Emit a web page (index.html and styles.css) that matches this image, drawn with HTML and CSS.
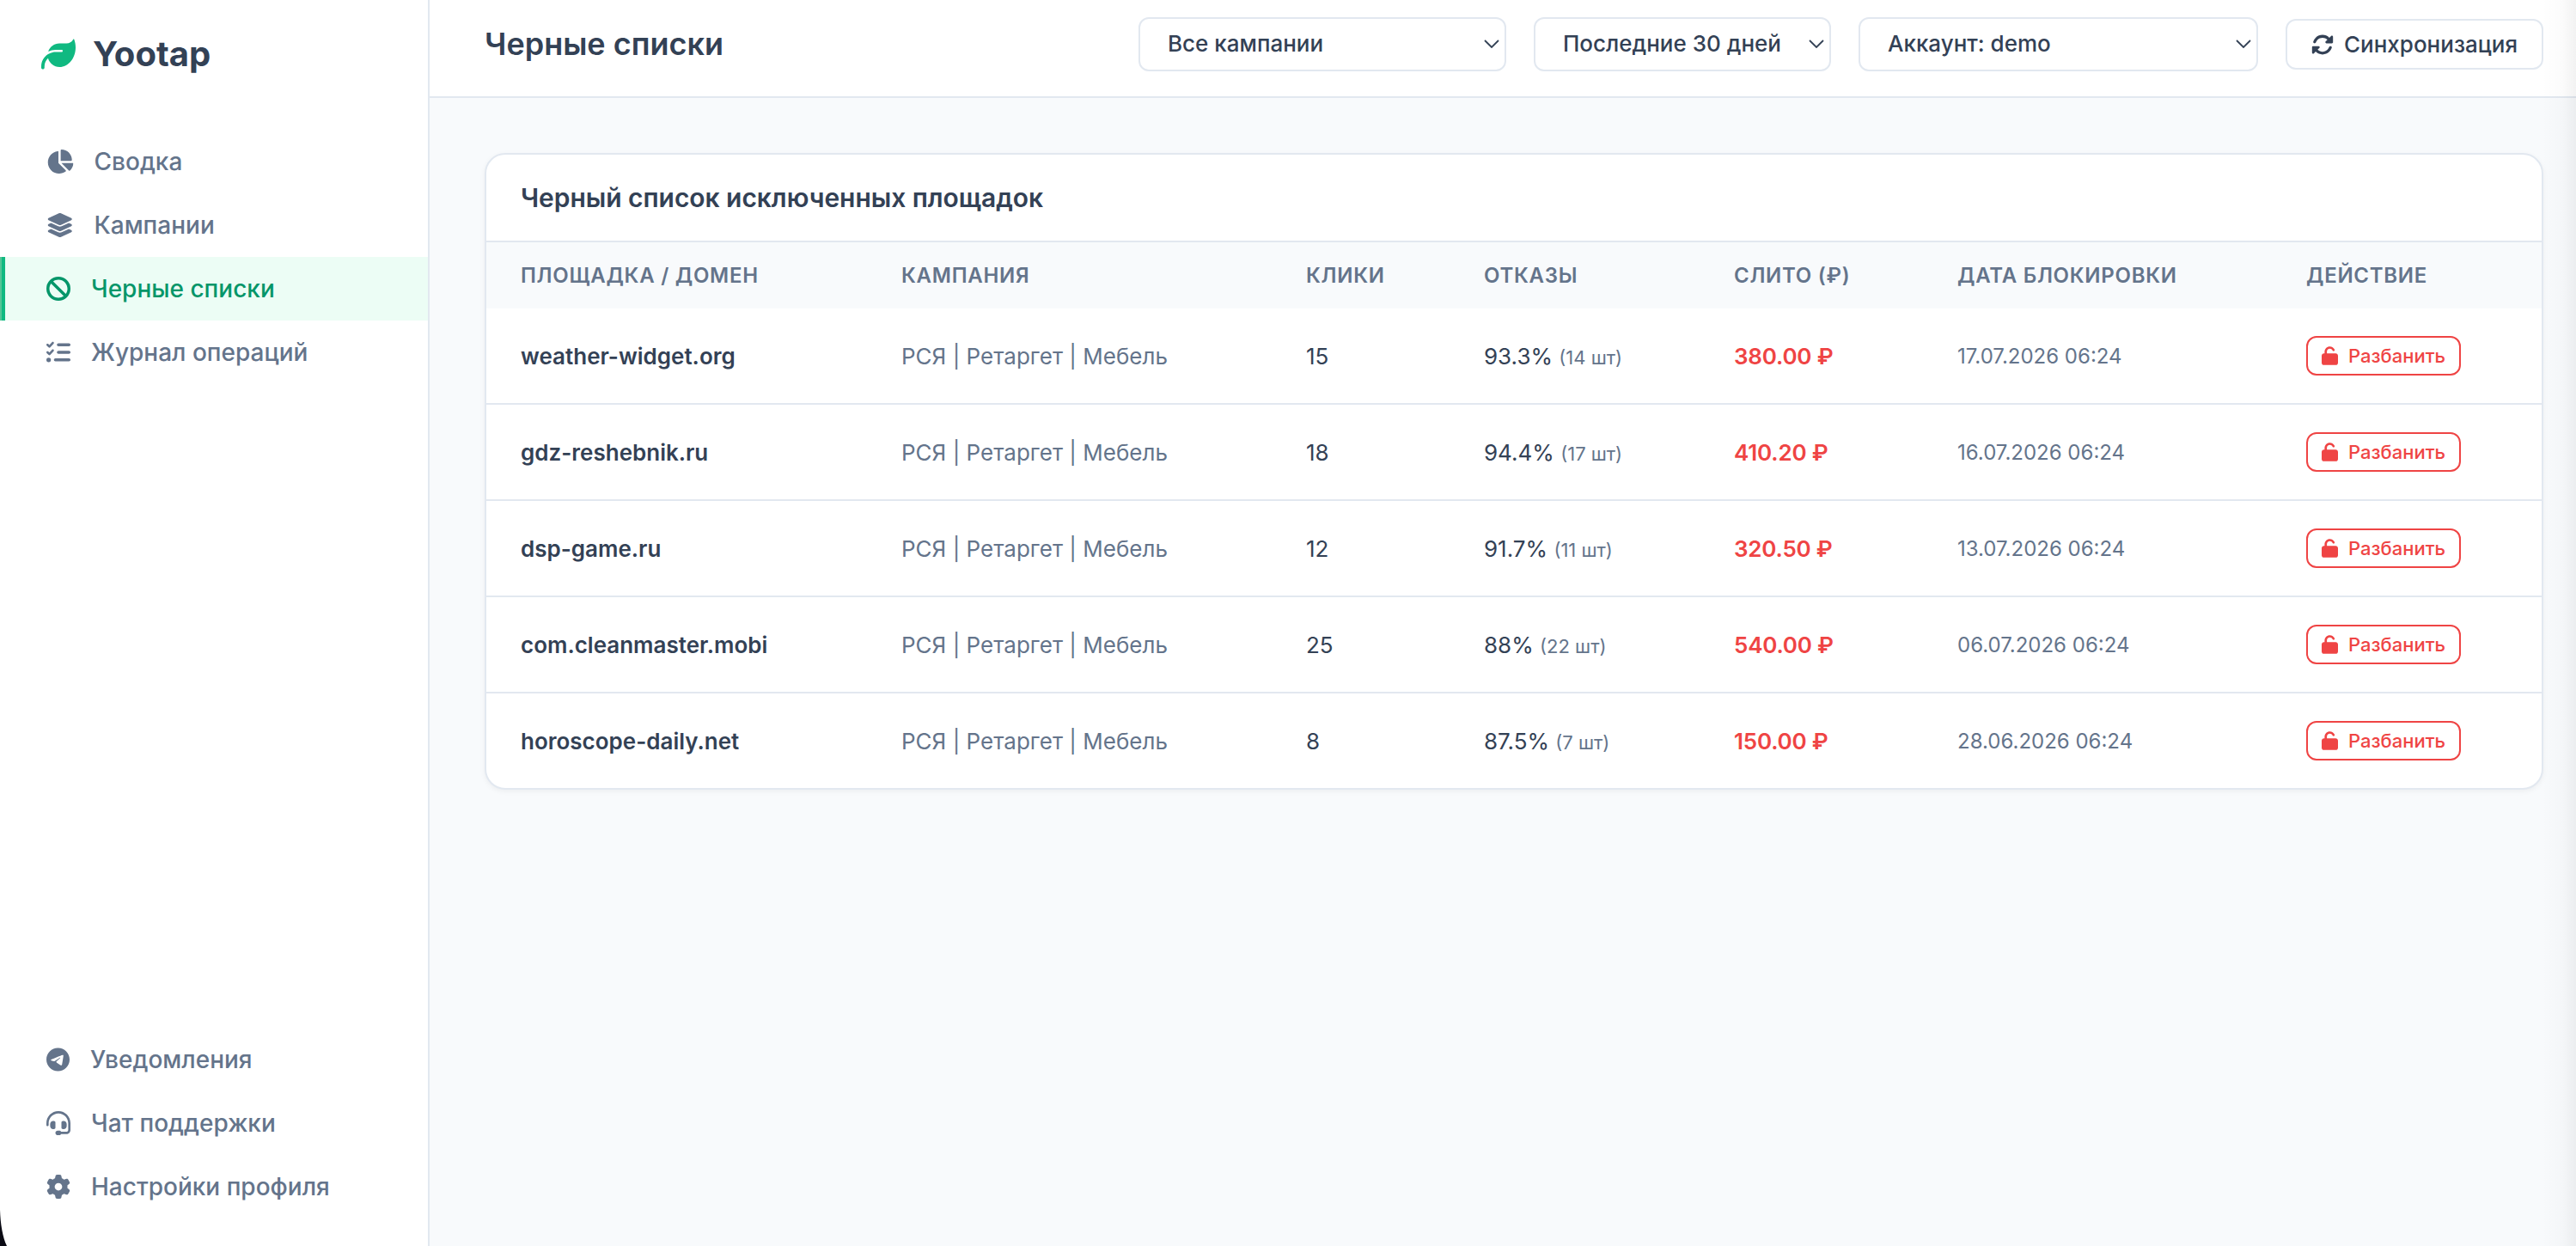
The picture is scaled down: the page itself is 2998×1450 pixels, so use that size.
FILE: index.html
```html
<!DOCTYPE html>
<html lang="ru">
  <head>
    <meta charset="UTF-8" />
    <meta name="viewport" content="width=device-width, initial-scale=1.0" />
    <title>Yootap - Черные списки</title>
    <link rel="stylesheet" href="styles.css">
  </head>
  <body>
    <!-- иконки -->
    <svg class="sprite">
      <symbol id="i-leaf" viewBox="0 0 512 512"><path d="M272 96c-78.6 0-145.1 51.5-167.7 122.5c33.6-17 71.5-26.5 111.7-26.5h88c8.8 0 16 7.2 16 16s-7.2 16-16 16H288 216s0 0 0 0c-16.6 0-32.7 1.9-48.3 5.4c-25.9 5.9-49.9 16.4-71.4 30.7c0 0 0 0 0 0C38.3 298.8 0 364.9 0 440v16c0 13.3 10.7 24 24 24s24-10.7 24-24V440c0-48.7 20.7-92.5 53.8-123.2C121.6 392.3 190.3 448 272 448l1 0c132.1-.7 239-130.9 239-291.4c0-42.6-7.5-83.1-21.1-119.6c-2.6-6.9-12.7-6.6-16.2-.1C455.9 72.1 418.7 96 376 96L272 96z"/></symbol>
      <symbol id="i-pie" viewBox="0 0 576 512"><path d="M304 240V16.6c0-9 7-16.6 16-16.6C443.7 0 544 100.3 544 224c0 9-7.6 16-16.6 16H304zM32 272C32 150.7 122.1 50.3 239 34.3c9.2-1.3 17 6.1 17 15.4V288L412.5 444.5c6.7 6.7 6.2 17.7-1.5 23.1C371.8 495.6 323.8 512 272 512C139.5 512 32 404.6 32 272zm526.4 16c9.3 0 16.6 7.8 15.4 17c-7.7 55.9-34.6 105.6-73.9 142.3c-6 5.6-15.4 5.2-21.2-.7L320 288H558.4z"/></symbol>
      <symbol id="i-layers" viewBox="0 0 576 512"><path d="M264.5 5.2c14.9-6.9 32.1-6.9 47 0l218.6 101c8.5 3.9 13.9 12.4 13.9 21.8s-5.4 17.9-13.9 21.8l-218.6 101c-14.9 6.9-32.1 6.9-47 0L45.9 149.8C37.4 145.8 32 137.3 32 128s5.4-17.9 13.9-21.8L264.5 5.2zM476.9 209.6l53.2 24.6c8.5 3.9 13.9 12.4 13.9 21.8s-5.4 17.9-13.9 21.8l-218.6 101c-14.9 6.9-32.1 6.9-47 0L45.9 277.8C37.4 273.8 32 265.3 32 256s5.4-17.9 13.9-21.8l53.2-24.6 152 70.2c23.4 10.8 50.4 10.8 73.8 0l152-70.2zm-152 198.2l152-70.2 53.2 24.6c8.5 3.9 13.9 12.4 13.9 21.8s-5.4 17.9-13.9 21.8l-218.6 101c-14.9 6.9-32.1 6.9-47 0L45.9 405.8C37.4 401.8 32 393.3 32 384s5.4-17.9 13.9-21.8l53.2-24.6 152 70.2c23.4 10.8 50.4 10.8 73.8 0z"/></symbol>
      <symbol id="i-ban" viewBox="0 0 512 512"><path d="M367.2 412.5L99.5 144.8C77.1 176.1 64 214.5 64 256c0 106 86 192 192 192c41.5 0 79.9-13.1 111.2-35.5zm45.3-45.3C434.9 335.9 448 297.5 448 256c0-106-86-192-192-192c-41.5 0-79.9 13.1-111.2 35.5L412.5 367.2zM0 256a256 256 0 1 1 512 0A256 256 0 1 1 0 256z"/></symbol>
      <symbol id="i-list" viewBox="0 0 512 512"><path d="M152.1 38.2c9.9 8.9 10.7 24 1.8 33.9l-72 80c-4.4 4.9-10.6 7.8-17.2 7.9s-12.9-2.4-17.6-7L7 113C-2.3 103.6-2.3 88.4 7 79s24.6-9.4 33.9 0l22.1 22.1 55.1-61.2c8.9-9.9 24-10.7 33.9-1.8zm0 160c9.9 8.9 10.7 24 1.8 33.9l-72 80c-4.4 4.9-10.6 7.8-17.2 7.9s-12.9-2.4-17.6-7L7 273c-9.4-9.4-9.4-24.6 0-33.9s24.6-9.4 33.9 0l22.1 22.1 55.1-61.2c8.9-9.9 24-10.7 33.9-1.8zM224 96c0-17.7 14.3-32 32-32H480c17.7 0 32 14.3 32 32s-14.3 32-32 32H256c-17.7 0-32-14.3-32-32zm0 160c0-17.7 14.3-32 32-32H480c17.7 0 32 14.3 32 32s-14.3 32-32 32H256c-17.7 0-32-14.3-32-32zM160 416c0-17.7 14.3-32 32-32H480c17.7 0 32 14.3 32 32s-14.3 32-32 32H192c-17.7 0-32-14.3-32-32zM48 368a48 48 0 1 1 0 96 48 48 0 1 1 0-96z"/></symbol>
      <symbol id="i-telegram" viewBox="0 0 496 512"><path d="M248 8C111.033 8 0 119.033 0 256S111.033 504 248 504 496 392.967 496 256 384.967 8 248 8ZM362.952 176.66c-3.732 39.215-19.881 134.378-28.1 178.3-3.476 18.584-10.322 24.816-16.948 25.425-14.4 1.326-25.338-9.517-39.287-18.661-21.827-14.308-34.158-23.215-55.346-37.177-24.485-16.135-8.612-25 5.342-39.5 3.652-3.793 67.107-61.51 68.335-66.746.153-.655.3-3.1-1.154-4.384s-3.59-.849-5.135-.5q-3.283.746-104.608 69.142-14.845 10.194-26.894 9.934c-8.855-.191-25.888-5.006-38.551-9.123-15.531-5.048-27.875-7.717-26.8-16.291q.84-6.7 18.45-13.7 108.446-47.248 144.628-62.3c68.872-28.647 83.183-33.623 92.511-33.789 2.052-.034 6.639.474 9.61 2.885a10.452 10.452 0 0 1 3.53 6.716A43.765 43.765 0 0 1 362.952 176.66Z"/></symbol>
      <symbol id="i-headset" viewBox="0 0 512 512"><path d="M256 48C141.1 48 48 141.1 48 256v40c0 13.3-10.7 24-24 24s-24-10.7-24-24V256C0 114.6 114.6 0 256 0S512 114.6 512 256V400.1c0 48.6-39.4 88-88.1 88L313.6 488c-8.3 14.3-23.8 24-41.6 24H240c-26.5 0-48-21.5-48-48s21.5-48 48-48h32c17.8 0 33.3 9.7 41.6 24l110.4 .1c22.1 0 40-17.9 40-40V256c0-114.9-93.1-208-208-208zM144 208h16c17.7 0 32 14.3 32 32V352c0 17.7-14.3 32-32 32H144c-35.3 0-64-28.7-64-64V272c0-35.3 28.7-64 64-64zm224 0c35.3 0 64 28.7 64 64v48c0 35.3-28.7 64-64 64H352c-17.7 0-32-14.3-32-32V240c0-17.7 14.3-32 32-32h16z"/></symbol>
      <symbol id="i-gear" viewBox="0 0 512 512"><path d="M495.9 166.6c3.2 8.7 .5 18.4-6.4 24.6l-43.3 39.4c1.1 8.3 1.7 16.8 1.7 25.4s-.6 17.1-1.7 25.4l43.3 39.4c6.9 6.2 9.6 15.9 6.4 24.6c-4.4 11.9-9.7 23.3-15.8 34.3l-4.7 8.1c-6.6 11-14 21.4-22.1 31.2c-5.9 7.2-15.7 9.6-24.5 6.8l-55.7-17.7c-13.4 10.3-28.2 18.9-44 25.4l-12.5 57.1c-2 9.1-9 16.3-18.2 17.8c-13.8 2.3-28 3.5-42.5 3.5s-28.7-1.2-42.5-3.5c-9.2-1.5-16.2-8.7-18.2-17.8l-12.5-57.1c-15.8-6.5-30.6-15.1-44-25.4L83.1 425.9c-8.8 2.8-18.6 .3-24.5-6.8c-8.1-9.8-15.5-20.2-22.1-31.2l-4.7-8.1c-6.1-11-11.4-22.4-15.8-34.3c-3.2-8.7-.5-18.4 6.4-24.6l43.3-39.4C64.6 273.1 64 264.6 64 256s.6-17.1 1.7-25.4L22.4 191.2c-6.9-6.2-9.6-15.9-6.4-24.6c4.4-11.9 9.7-23.3 15.8-34.3l4.7-8.1c6.6-11 14-21.4 22.1-31.2c5.9-7.2 15.7-9.6 24.5-6.8l55.7 17.7c13.4-10.3 28.2-18.9 44-25.4l12.5-57.1c2-9.1 9-16.3 18.2-17.8C227.3 1.2 241.5 0 256 0s28.7 1.2 42.5 3.5c9.2 1.5 16.2 8.7 18.2 17.8l12.5 57.1c15.8 6.5 30.6 15.1 44 25.4l55.7-17.7c8.8-2.8 18.6-.3 24.5 6.8c8.1 9.8 15.5 20.2 22.1 31.2l4.7 8.1c6.1 11 11.4 22.4 15.8 34.3zM256 336a80 80 0 1 0 0-160 80 80 0 1 0 0 160z"/></symbol>
      <symbol id="i-unlock" viewBox="0 0 448 512"><path d="M144 144c0-44.2 35.8-80 80-80c31.9 0 60.3 18.7 72.7 46.6c7.2 16.1 26.1 23.4 42.3 16.2s23.4-26.1 16.2-42.3C331.9 34.7 282.1 0 224 0C144.5 0 80 64.5 80 144v48H64c-35.3 0-64 28.7-64 64V448c0 35.3 28.7 64 64 64H384c35.3 0 64-28.7 64-64V256c0-35.3-28.7-64-64-64H144V144z"/></symbol>
      <symbol id="i-sync" viewBox="0 0 512 512"><path d="M142.9 142.9c62.2-62.2 162.7-62.5 225.3-1L327 183c-6.9 6.9-8.9 17.2-5.2 26.2s12.5 14.8 22.2 14.8H472c13.3 0 24-10.7 24-24V72c0-9.7-5.8-18.5-14.8-22.2s-19.3-1.7-26.2 5.2L413.4 96.6c-87.6-86.5-228.7-86.2-315.8 1C73.2 122 55.6 150.7 44.8 181.4c-5.9 16.7 2.9 34.9 19.5 40.8s34.9-2.9 40.8-19.5c7.7-21.8 20.2-42.3 37.8-59.8zM16 312V440c0 9.7 5.8 18.5 14.8 22.2s19.3 1.7 26.2-5.2l41.6-41.6c87.6 86.5 228.7 86.2 315.8-1c24.4-24.4 42.1-53.1 52.9-83.7c5.9-16.7-2.9-34.9-19.5-40.8s-34.9 2.9-40.8 19.5c-7.7 21.8-20.2 42.3-37.8 59.8c-62.2 62.2-162.7 62.5-225.3 1L185 329c6.9-6.9 8.9-17.2 5.2-26.2s-12.5-14.8-22.2-14.8H40c-13.3 0-24 10.7-24 24z"/></symbol>
      <symbol id="i-down" viewBox="0 0 18 10"><path d="M1 1l8 8 8-8" fill="none" stroke="currentColor" stroke-width="1.8"/></symbol>
    </svg>

    <div class="app">
      <div class="sidebar">
        <div class="logo">
          <svg class="logo_icon"><use href="#i-leaf"/></svg>
          <span>Yootap</span>
        </div>
        <ul class="nav">
          <li><svg class="icon wide"><use href="#i-pie"/></svg>Сводка</li>
          <li><svg class="icon wide"><use href="#i-layers"/></svg>Кампании</li>
          <li class="current"><svg class="icon"><use href="#i-ban"/></svg>Черные списки</li>
          <li><svg class="icon"><use href="#i-list"/></svg>Журнал операций</li>
        </ul>
        <ul class="nav nav_bottom">
          <li><svg class="icon narrow"><use href="#i-telegram"/></svg>Уведомления</li>
          <li><svg class="icon"><use href="#i-headset"/></svg>Чат поддержки</li>
          <li><svg class="icon"><use href="#i-gear"/></svg>Настройки профиля</li>
        </ul>
      </div>

      <div class="main">
        <div class="topbar">
          <h1>Черные списки</h1>
          <div class="filters">
            <div class="select campaign">Все кампании<svg class="arrow"><use href="#i-down"/></svg></div>
            <div class="select period">Последние 30 дней<svg class="arrow"><use href="#i-down"/></svg></div>
            <div class="select account">Аккаунт: demo<svg class="arrow"><use href="#i-down"/></svg></div>
            <button class="sync"><svg class="sync_icon"><use href="#i-sync"/></svg>Синхронизация</button>
          </div>
        </div>

        <div class="card">
          <h2>Черный список исключенных площадок</h2>
          <table>
            <colgroup>
              <col class="c1"><col class="c2"><col class="c3"><col class="c4"><col class="c5"><col class="c6"><col>
            </colgroup>
            <thead>
              <tr>
                <th>Площадка / Домен</th>
                <th>Кампания</th>
                <th>Клики</th>
                <th>Отказы</th>
                <th>Слито (₽)</th>
                <th>Дата блокировки</th>
                <th>Действие</th>
              </tr>
            </thead>
            <tbody>
              <tr>
                <td class="domain">weather-widget.org</td>
                <td class="muted">РСЯ | Ретаргет | Мебель</td>
                <td>15</td>
                <td>93.3% <small>(14 шт)</small></td>
                <td class="cost">380.00 ₽</td>
                <td class="date">17.07.2026 06:24</td>
                <td><button class="unban"><svg class="lock"><use href="#i-unlock"/></svg>Разбанить</button></td>
              </tr>
              <tr>
                <td class="domain">gdz-reshebnik.ru</td>
                <td class="muted">РСЯ | Ретаргет | Мебель</td>
                <td>18</td>
                <td>94.4% <small>(17 шт)</small></td>
                <td class="cost">410.20 ₽</td>
                <td class="date">16.07.2026 06:24</td>
                <td><button class="unban"><svg class="lock"><use href="#i-unlock"/></svg>Разбанить</button></td>
              </tr>
              <tr>
                <td class="domain">dsp-game.ru</td>
                <td class="muted">РСЯ | Ретаргет | Мебель</td>
                <td>12</td>
                <td>91.7% <small>(11 шт)</small></td>
                <td class="cost">320.50 ₽</td>
                <td class="date">13.07.2026 06:24</td>
                <td><button class="unban"><svg class="lock"><use href="#i-unlock"/></svg>Разбанить</button></td>
              </tr>
              <tr>
                <td class="domain">com.cleanmaster.mobi</td>
                <td class="muted">РСЯ | Ретаргет | Мебель</td>
                <td>25</td>
                <td>88% <small>(22 шт)</small></td>
                <td class="cost">540.00 ₽</td>
                <td class="date">06.07.2026 06:24</td>
                <td><button class="unban"><svg class="lock"><use href="#i-unlock"/></svg>Разбанить</button></td>
              </tr>
              <tr>
                <td class="domain">horoscope-daily.net</td>
                <td class="muted">РСЯ | Ретаргет | Мебель</td>
                <td>8</td>
                <td>87.5% <small>(7 шт)</small></td>
                <td class="cost">150.00 ₽</td>
                <td class="date">28.06.2026 06:24</td>
                <td><button class="unban"><svg class="lock"><use href="#i-unlock"/></svg>Разбанить</button></td>
              </tr>
            </tbody>
          </table>
        </div>
      </div>
    </div>

    <!-- тень справа и угол окна -->
    <div class="edge"></div>
    <svg class="corner" viewBox="0 0 8 42"><path d="M0 0C.5 16 3 32 8 42H0z"/></svg>
  </body>
</html>
```
FILE: styles.css
```css
* {
  margin: 0;
  padding: 0;
  box-sizing: border-box;
}

body {
  font-family: Inter, "Noto Sans", sans-serif;
  font-size: 26px;
  color: #334155;
  background-color: #f8fafc;
  overflow: hidden;
}

li {
  list-style-type: none;
}

svg {
  display: block;
  flex-shrink: 0;
  fill: currentColor;
}

button {
  font-family: inherit;
  background-color: #fff;
}

.sprite {
  display: none;
}

.app {
  display: flex;
  height: 1450px;
}

/* боковое меню */
.sidebar {
  display: flex;
  flex-direction: column;
  width: 500px;
  flex-shrink: 0;
  border-right: 2px solid #e2e8f0;
  background-color: #fff;
}

.logo {
  display: flex;
  align-items: center;
  gap: 20px;
  height: 125px;
  padding-left: 48px;
  margin-bottom: 26px;
  font-size: 40px;
  font-weight: 700;
}

.logo_icon {
  width: 40px;
  height: 40px;
  color: #10b981;
}

.nav li {
  display: flex;
  align-items: center;
  gap: 24px;
  height: 74px;
  padding-left: 48px;
  border-left: 6px solid transparent;
  font-size: 28px;
  font-weight: 500;
  color: #64748b;
}

.nav .current {
  background: linear-gradient(to right, #54c596 2px, #10b981 2px, #10b981 6px, #ecfdf5 6px) border-box;
  color: #059669;
}

.nav_bottom {
  margin-top: auto;
  padding-bottom: 32px;
}

.icon {
  width: 28px;
  height: 28px;
}

.icon.wide {
  width: 31.5px;
}

.icon.narrow {
  width: 27px;
}

/* верхняя панель */
.main {
  flex: 1;
}

.topbar {
  display: flex;
  justify-content: space-between;
  align-items: center;
  height: 114px;
  padding: 0 38px 9px 64px;
  border-bottom: 2px solid #e2e8f0;
  background-color: #fff;
}

h1 {
  padding-bottom: 2px;
  font-size: 36px;
  font-weight: 600;
}

.filters {
  display: flex;
  align-items: center;
  gap: 32px;
  font-weight: 500;
}

.select {
  display: flex;
  justify-content: space-between;
  align-items: center;
  height: 63px;
  padding: 0 6px 2px 32px;
  border: 2px solid #e2e8f0;
  border-radius: 12px;
}

.campaign {
  width: 428px;
}

.period {
  width: 346px;
}

.account {
  width: 465px;
}

.arrow {
  width: 18px;
  height: 10px;
}

.sync {
  display: flex;
  justify-content: center;
  align-items: center;
  gap: 12px;
  width: 300px;
  height: 59px;
  border: 2px solid #e2e8f0;
  border-radius: 12px;
  font-size: 26px;
  font-weight: 500;
  color: #334155;
}

.sync_icon {
  width: 26px;
  height: 26px;
}

/* таблица */
.card {
  margin: 64px 38px 0 64px;
  border: 2px solid #e2e8f0;
  border-radius: 24px;
  background-color: #fff;
  box-shadow: 0 2px 6px rgba(0, 0, 0, 0.05);
  overflow: hidden;
}

h2 {
  height: 102px;
  padding-left: 40px;
  line-height: 100px;
  border-bottom: 2px solid #e2e8f0;
  font-size: 30px;
  font-weight: 600;
  letter-spacing: -0.05px;
}

table {
  width: 100%;
  table-layout: fixed;
  border-collapse: separate;
  border-spacing: 0;
}

th {
  height: 77px;
  padding-left: 40px;
  text-align: left;
  text-transform: uppercase;
  font-size: 24px;
  font-weight: 600;
  letter-spacing: 0.72px;
  color: #64748b;
  background-color: #f8fafc;
}

td {
  height: 112px;
  padding-left: 40px;
  border-bottom: 2px solid #e2e8f0;
}

tr:last-child td {
  height: 110px;
  border-bottom: none;
}

.c1 { width: 443px; }
.c2 { width: 471px; }
.c3 { width: 207px; }
.c4 { width: 291px; }
.c5 { width: 260px; }
.c6 { width: 406px; }

.domain {
  font-weight: 600;
}

.muted {
  color: #64748b;
}

td small {
  font-size: 22px;
  color: #64748b;
}

.cost {
  font-weight: 600;
  letter-spacing: -0.2px;
  color: #ef4444;
}

.date {
  font-size: 24px;
  color: #64748b;
}

.unban {
  display: flex;
  align-items: center;
  gap: 12px;
  width: 180px;
  height: 46px;
  padding-left: 16px;
  border: 2px solid #ef4444;
  border-radius: 12px;
  font-size: 22px;
  font-weight: 500;
  color: #ef4444;
}

.lock {
  width: 19px;
  height: 22px;
}

.edge {
  position: absolute;
  top: 0;
  right: 0;
  width: 40px;
  height: 1450px;
  background: linear-gradient(to right, rgba(0, 0, 0, 0), rgba(0, 0, 0, 0.015) 60%, rgba(0, 0, 0, 0.05));
}

.corner {
  position: absolute;
  left: 0;
  top: 1408px;
  width: 8px;
  height: 42px;
  fill: #0b0b14;
}
```
